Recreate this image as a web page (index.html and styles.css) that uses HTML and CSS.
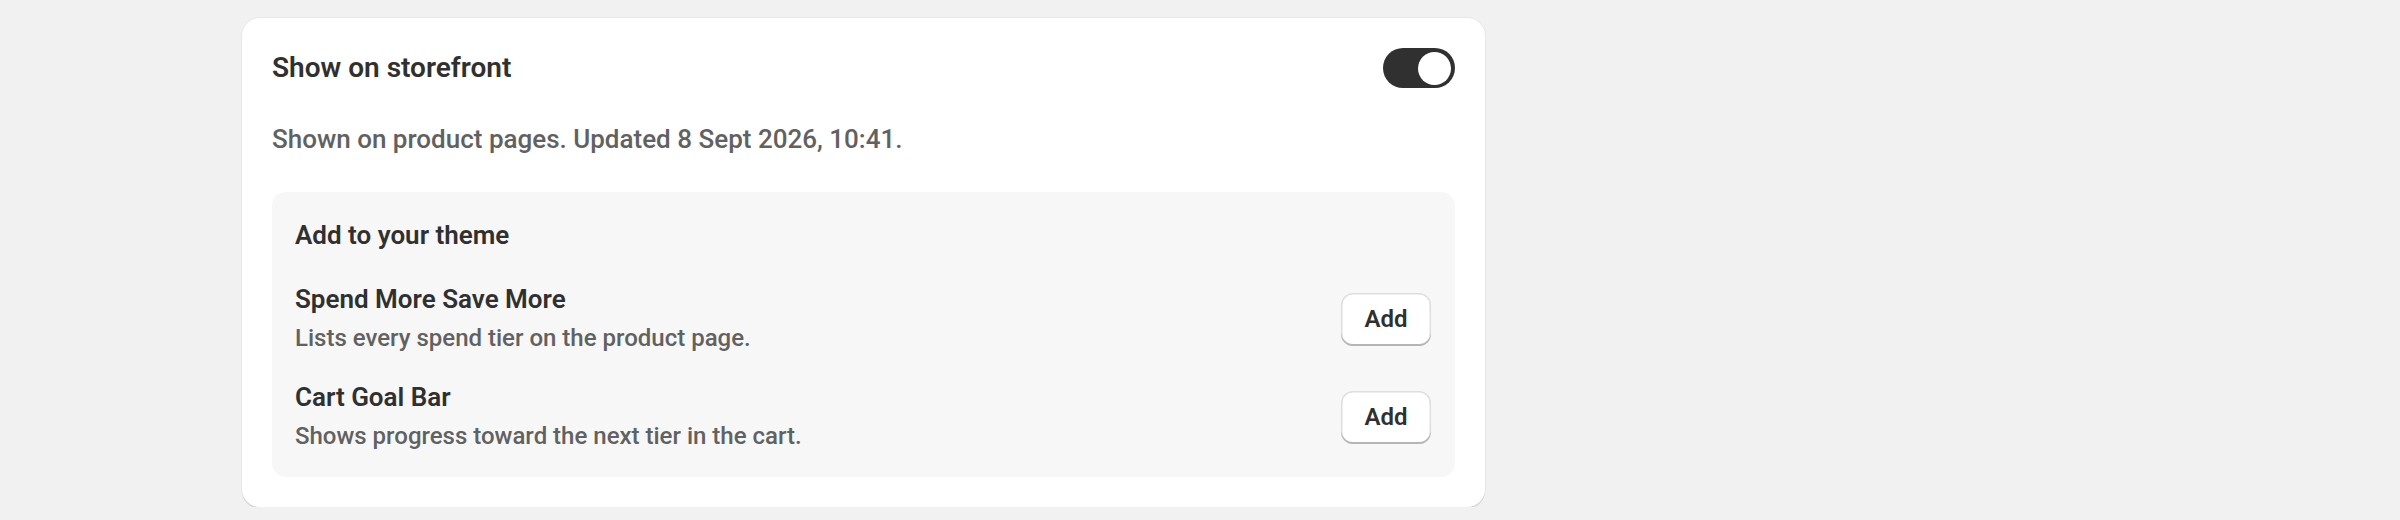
FILE: index.html
```html
<!DOCTYPE html>
<html lang="en">
<head>
    <meta charset="UTF-8">
    <meta name="viewport" content="width=device-width, initial-scale=1.0">
    <title>Storefront visibility</title>
    <link rel="stylesheet" href="styles.css">
</head>
<body>
    <div class="page">
        <div class="card">
            <div class="card-header">
                <h2 class="card-title">Show on storefront</h2>
                <button class="toggle on" aria-label="Show on storefront" aria-pressed="true">
                    <span class="toggle-knob"></span>
                </button>
            </div>
            <p class="card-subtitle">Shown on product pages. Updated 8 Sept 2026, 10:41.</p>

            <div class="theme-box">
                <h3 class="theme-title">Add to your theme</h3>
                <div class="block-list">
                    <div class="block-row">
                        <div class="block-text">
                            <div class="block-name">Spend More Save More</div>
                            <div class="block-desc">Lists every spend tier on the product page.</div>
                        </div>
                        <button class="add-button">Add</button>
                    </div>
                    <div class="block-row">
                        <div class="block-text">
                            <div class="block-name">Cart Goal Bar</div>
                            <div class="block-desc">Shows progress toward the next tier in the cart.</div>
                        </div>
                        <button class="add-button">Add</button>
                    </div>
                </div>
            </div>
        </div>
    </div>
</body>
</html>
```

FILE: styles.css
```css
body {
    font-family: Roboto, "Liberation Sans", Arial, sans-serif;
    background-color: #f1f1f1;
    color: #303030;
    margin: 0;
}

.page {
    padding: 18px 0 0 242px;
}

.card {
    background-color: white;
    width: 1243px;
    box-sizing: border-box;
    padding: 30px;
    border-radius: 18px;
    box-shadow: 0 2px 0 rgba(0, 0, 0, 0.08), 0 0 0 1px rgba(0, 0, 0, 0.04);
}

.card-header {
    display: flex;
    justify-content: space-between;
    align-items: center;
    height: 40px;
}

.card-title {
    margin: 0;
    font-size: 28px;
    font-weight: 600;
    line-height: 40px;
}

.toggle {
    width: 72px;
    height: 40px;
    border: none;
    border-radius: 20px;
    background-color: #c4c4c4;
    padding: 0 4px;
    display: flex;
    align-items: center;
    cursor: pointer;
}

.toggle.on {
    background-color: #303030;
    justify-content: flex-end;
}

.toggle-knob {
    width: 33px;
    height: 33px;
    border-radius: 50%;
    background-color: white;
}

.card-subtitle {
    margin: 32px 0 0;
    font-size: 26px;
    font-weight: 500;
    line-height: 38px;
    color: #616161;
}

.theme-box {
    margin-top: 34px;
    background-color: #f7f7f7;
    border-radius: 14px;
    padding: 24px 24px 21px 23px;
}

.theme-title {
    margin: 0 0 25px;
    font-size: 26px;
    font-weight: 600;
    line-height: 39px;
}

.block-list {
    display: flex;
    flex-direction: column;
    gap: 20px;
}

.block-row {
    display: flex;
    justify-content: space-between;
    align-items: center;
}

.block-name {
    font-size: 26px;
    font-weight: 600;
    line-height: 39px;
}

.block-desc {
    font-size: 24px;
    font-weight: 500;
    line-height: 39px;
    color: #616161;
}

.add-button {
    font-family: inherit;
    font-size: 24px;
    font-weight: 600;
    color: #303030;
    background-color: white;
    width: 90px;
    height: 53px;
    border: none;
    border-radius: 12px;
    box-shadow: inset 0 -2px 0 #b5b5b5, inset 0 0 0 1.5px #dedede;
    cursor: pointer;
}
```
